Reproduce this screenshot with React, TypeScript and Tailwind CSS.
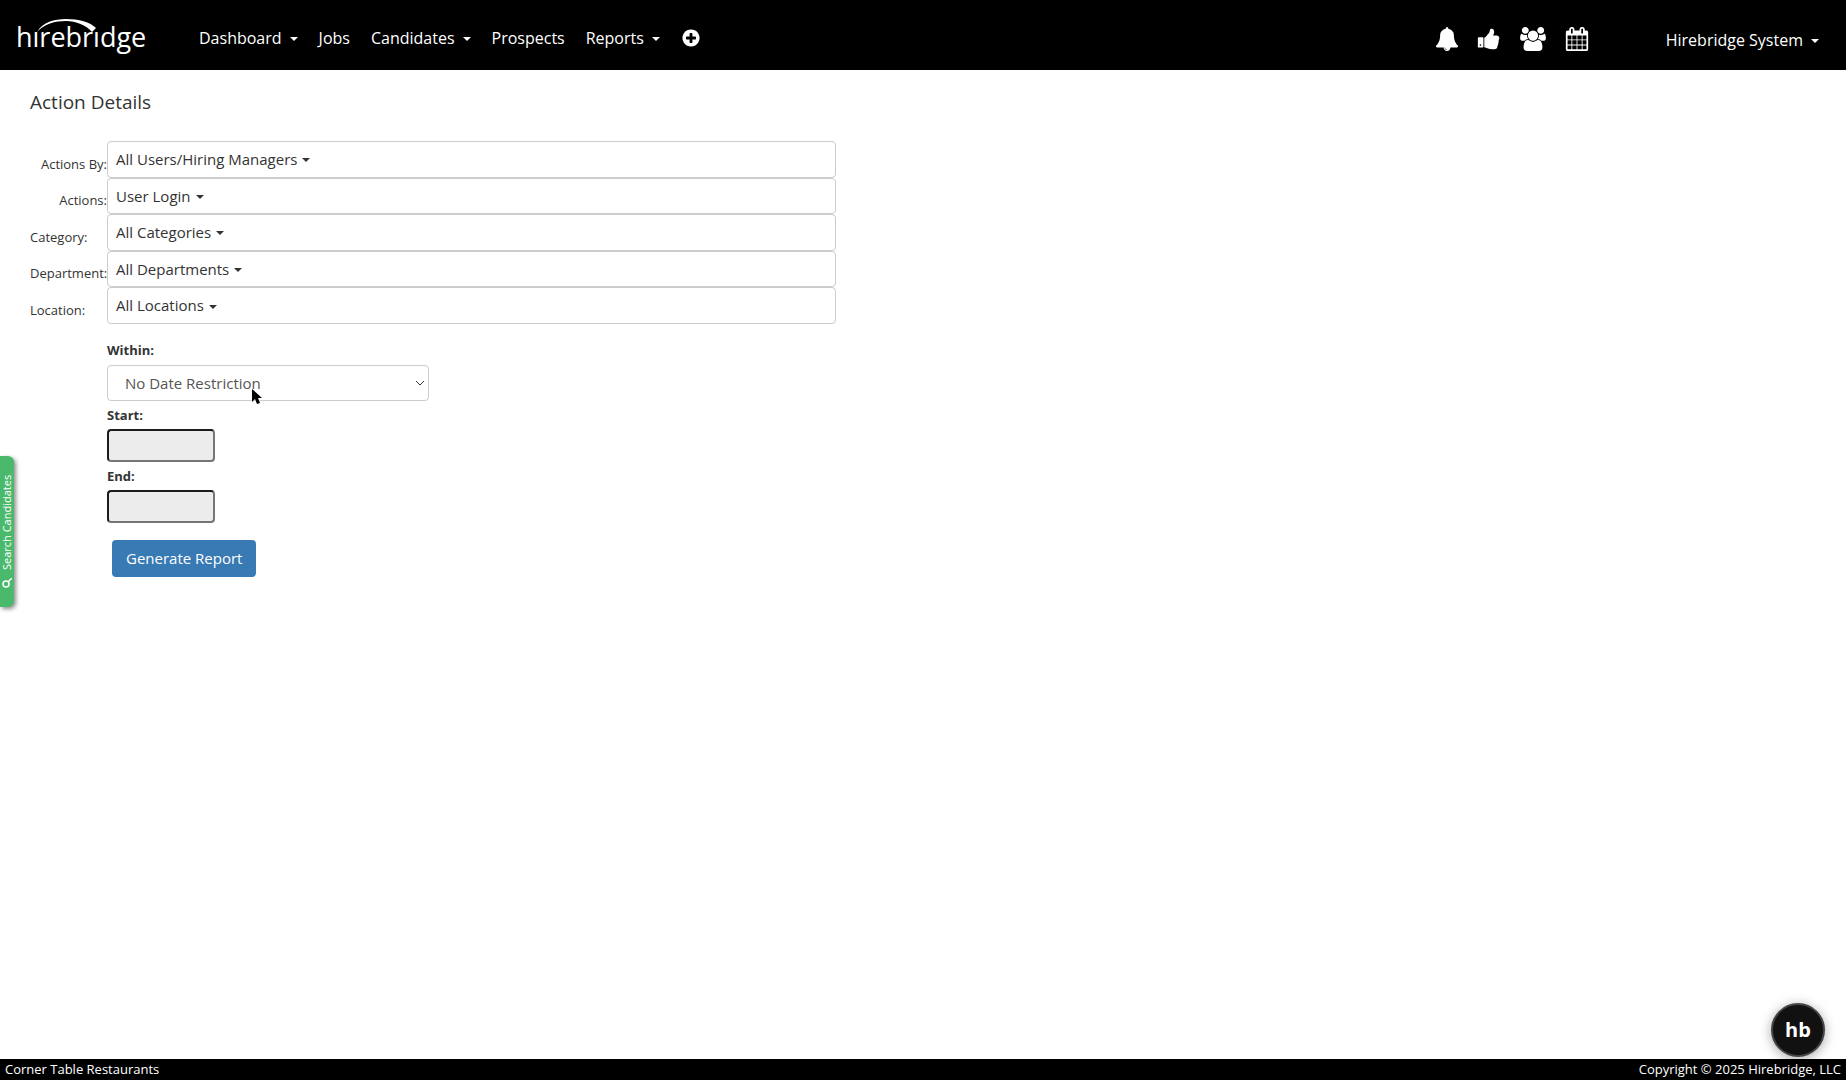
import type { ReactNode } from "react";

interface NavItem {
  label: string;
  hasMenu?: boolean;
}

interface Filter {
  id: string;
  label: string;
  value: string;
  alignRight?: boolean;
}

const NAV_ITEMS: NavItem[] = [
  { label: "Dashboard", hasMenu: true },
  { label: "Jobs" },
  { label: "Candidates", hasMenu: true },
  { label: "Prospects" },
  { label: "Reports", hasMenu: true },
];

const FILTERS: Filter[] = [
  { id: "actions-by", label: "Actions By:", value: "All Users/Hiring Managers", alignRight: true },
  { id: "actions", label: "Actions:", value: "User Login", alignRight: true },
  { id: "category", label: "Category:", value: "All Categories" },
  { id: "department", label: "Department:", value: "All Departments" },
  { id: "location", label: "Location:", value: "All Locations" },
];

const ICONS = {
  plus: "M1344 960v-128q0-26-19-45t-45-19h-256v-256q0-26-19-45t-45-19h-128q-26 0-45 19t-19 45v256h-256q-26 0-45 19t-19 45v128q0 26 19 45t45 19h256v256q0 26 19 45t45 19h128q26 0 45-19t19-45v-256h256q26 0 45-19t19-45zm320-64q0 209-103 385.5t-279.5 279.5-385.5 103-385.5-103-279.5-279.5-103-385.5 103-385.5 279.5-279.5 385.5-103 385.5 103 279.5 279.5 103 385.5z",
  bell: "M912 1696q0-16-16-16-59 0-101.5-42.5t-42.5-101.5q0-16-16-16t-16 16q0 73 51.5 124.5t124.5 51.5q16 0 16-16zm816-288q0 52-38 90t-90 38h-448q0 106-75 181t-181 75-181-75-75-181h-448q-52 0-90-38t-38-90q50-42 91-88t85-119.5 74.5-158.5 50-206 19.5-260q0-152 117-282.5t307-158.5q-8-19-8-39 0-40 28-68t68-28 68 28 28 68q0 20-8 39 190 28 307 158.5t117 282.5q0 139 19.5 260t50 206 74.5 158.5 85 119.5 91 88z",
  thumb: "M320 1344q0-26-19-45t-45-19q-27 0-45.5 19t-18.5 45q0 27 18.5 45.5t45.5 18.5q26 0 45-18.5t19-45.5zm160-512v640q0 26-19 45t-45 19h-288q-26 0-45-19t-19-45v-640q0-26 19-45t45-19h288q26 0 45 19t19 45zm1184 0q0 86-55 149 15 44 15 76 3 76-43 137 17 56 0 117-15 57-54 94 9 112-49 181-64 76-197 78h-129q-66 0-144-15.5t-121.5-29-120.5-39.5q-123-43-158-44-26-1-45-19.5t-19-44.5v-641q0-25 18-43.5t43-20.5q24-2 76-59t101-121q68-87 101-120 18-18 31-48t17.5-48.5 13.5-60.5q7-39 12.5-61t19.5-52 34-50q19-19 45-19 46 0 82.5 10.5t60 26 40 40.5 24 45 12 50 5 45 .5 39q0 38-9.5 76t-19 60-27.5 56q-3 6-10 18t-11 22-8 24h277q78 0 135 57t57 135z",
  users: "M657 896q-162 5-265 128h-134q-82 0-138-40.5t-56-118.5q0-353 124-353 6 0 43.5 21t97.5 42.5 119 21.5q67 0 133-23-5 37-5 66 0 139 81 256zm1071 637q0 120-73 189.5t-194 69.5h-874q-121 0-194-69.5t-73-189.5q0-53 3.5-103.5t14-109 26.5-108.5 43-97.5 62-81 85.5-53.5 111.5-20q10 0 43 21.5t73 48 107 48 135 21.5 135-21.5 107-48 73-48 43-21.5q61 0 111.5 20t85.5 53.5 62 81 43 97.5 26.5 108.5 14 109 3.5 103.5zm-1024-1277q0 106-75 181t-181 75-181-75-75-181 75-181 181-75 181 75 75 181zm704 384q0 159-112.5 271.5t-271.5 112.5-271.5-112.5-112.5-271.5 112.5-271.5 271.5-112.5 271.5 112.5 112.5 271.5zm576 225q0 78-56 118.5t-138 40.5h-134q-103-123-265-128 81-117 81-256 0-29-5-66 66 23 133 23 59 0 119-21.5t97.5-42.5 43.5-21q124 0 124 353zm-128-609q0 106-75 181t-181 75-181-75-75-181 75-181 181-75 181 75 75 181z",
  calendar: "M192 1664h288v-288h-288v288zm352 0h320v-288h-320v288zm-352-352h288v-320h-288v320zm352 0h320v-320h-320v320zm-352-384h288v-288h-288v288zm736 736h320v-288h-320v288zm-384-736h320v-288h-320v288zm768 736h288v-288h-288v288zm-384-352h320v-320h-320v320zm-352-864v-288q0-13-9.5-22.5t-22.5-9.5h-64q-13 0-22.5 9.5t-9.5 22.5v288q0 13 9.5 22.5t22.5 9.5h64q13 0 22.5-9.5t9.5-22.5zm736 864h288v-320h-288v320zm-384-384h320v-288h-320v288zm384 0h288v-288h-288v288zm32-480v-288q0-13-9.5-22.5t-22.5-9.5h-64q-13 0-22.5 9.5t-9.5 22.5v288q0 13 9.5 22.5t22.5 9.5h64q13 0 22.5-9.5t9.5-22.5zm384-64v1280q0 52-38 90t-90 38h-1408q-52 0-90-38t-38-90v-1280q0-52 38-90t90-38h128v-96q0-66 47-113t113-47h64q66 0 113 47t47 113v96h384v-96q0-66 47-113t113-47h64q66 0 113 47t47 113v96h128q52 0 90 38t38 90z",
};

function Icon({ path, className, viewBox = "0 0 1792 1792" }: { path: string; className: string; viewBox?: string }) {
  return (
    <svg viewBox={viewBox} className={className} fill="currentColor" aria-hidden="true">
      <path d={path} />
    </svg>
  );
}

function Caret() {
  return <span className="mt-0.5 inline-block border-x-4 border-t-4 border-x-transparent border-t-current" />;
}

function Logo() {
  return (
    <a href="#" className="relative mt-1 block w-[130px] text-[27px] leading-[40px]">
      h&#305;rebr&#305;dge
      <svg viewBox="0 0 130 40" className="absolute inset-x-0 top-0 h-10 w-full" fill="currentColor" aria-hidden="true">
        <path d="M21 15C27 5 38 2 50 2c13 0 24 3 30 9l-4 4C70 8 60 4 50 4 39 4 28 7 21 15z" />
      </svg>
    </a>
  );
}

function IconButton({ label, children }: { label: string; children: ReactNode }) {
  return (
    <button type="button" aria-label={label}>
      {children}
    </button>
  );
}

function Header() {
  return (
    <header className="flex h-[70px] items-center bg-black pr-[27px] pl-4 text-white">
      <Logo />
      <nav className="ml-[53px] flex items-center gap-[21px] pt-1.5 text-base">
        {NAV_ITEMS.map((item) => (
          <a key={item.label} href="#" className="flex items-center gap-2">
            {item.label}
            {item.hasMenu && <Caret />}
          </a>
        ))}
        <IconButton label="Add">
          <Icon path={ICONS.plus} className="size-5" />
        </IconButton>
      </nav>
      <div className="ml-auto flex items-center gap-[18px] pt-2">
        <IconButton label="Notifications">
          <Icon path={ICONS.bell} className="size-6" />
        </IconButton>
        <IconButton label="Approvals">
          <Icon path={ICONS.thumb} className="size-6" />
        </IconButton>
        <IconButton label="Teams">
          <Icon path={ICONS.users} viewBox="0 0 2048 1792" className="h-6 w-7" />
        </IconButton>
        <IconButton label="Calendar">
          <Icon path={ICONS.calendar} className="size-6" />
        </IconButton>
      </div>
      <button type="button" className="ml-[77px] flex items-center gap-2 pt-2.5 text-base">
        Hirebridge System
        <Caret />
      </button>
    </header>
  );
}

function FilterRow({ filter }: { filter: Filter }) {
  return (
    <div className="flex">
      <label
        htmlFor={filter.id}
        className={`w-[77px] self-center pt-2.5 text-[13px] whitespace-nowrap ${filter.alignRight ? "text-right" : ""}`}
      >
        {filter.label}
      </label>
      <button
        id={filter.id}
        type="button"
        className="flex flex-1 items-center gap-[5px] rounded border border-[#ccc] px-2 text-[15px]"
      >
        {filter.value}
        <Caret />
      </button>
    </div>
  );
}

function DateField({ id, label }: { id: string; label: string }) {
  return (
    <div className="flex flex-col items-start">
      <label htmlFor={id} className="text-[13px] leading-5 font-bold">
        {label}
      </label>
      <input
        id={id}
        type="text"
        disabled
        className="mt-1 h-[33px] w-[108px] rounded border-2 border-t-[#1c1c1c] border-r-[#767676] border-b-[#767676] border-l-[#1c1c1c] bg-[#ececec] px-2"
      />
    </div>
  );
}

// Mouse pointer resting over the date select
function Pointer() {
  return (
    <svg viewBox="0 0 12 18" className="absolute top-[23px] left-36 h-[18px] w-3" aria-hidden="true">
      <path d="M1 1v13l3-3 2 5 3-1-2-5h4z" fill="#000" stroke="#fff" strokeWidth="1" paintOrder="stroke" />
    </svg>
  );
}

export default function App() {
  return (
    <div className="relative flex min-h-screen flex-col bg-white font-['Open_Sans',sans-serif] text-[#333]">
      <Header />

      <main className="flex-1 px-[30px] pt-4">
        <h1 className="text-[19px] leading-8">Action Details</h1>

        <form className="mt-[23px]">
          <div className="grid h-[183px] w-1/2 max-w-[806px] grid-rows-5">
            {FILTERS.map((filter) => (
              <FilterRow key={filter.id} filter={filter} />
            ))}
          </div>

          <div className="mt-4 ml-[77px]">
            <label htmlFor="within" className="block text-[13px] leading-5 font-bold">
              Within:
            </label>
            <div className="relative mt-[5px] w-[322px]">
              <select
                id="within"
                className="h-9 w-full appearance-none rounded border border-[#ccc] bg-white px-[17px] text-[15px] text-[#555]"
              >
                <option>No Date Restriction</option>
              </select>
              <svg viewBox="0 0 10 6" className="pointer-events-none absolute top-[15px] right-1 h-1.5 w-2.5" fill="none" stroke="#333" aria-hidden="true">
                <path d="M1 1l4 4 4-4" />
              </svg>
              <Pointer />
            </div>
            <div className="mt-1 flex flex-col gap-1">
              <DateField id="start" label="Start:" />
              <DateField id="end" label="End:" />
            </div>
            <button type="button" className="mt-[17px] ml-[5px] h-[37px] rounded bg-[#387ab3] px-3.5 text-[15px] text-white">
              Generate Report
            </button>
          </div>
        </form>
      </main>

      <button
        type="button"
        className="absolute top-[456px] left-0 flex h-[151px] w-3.5 rotate-180 items-center justify-center gap-2 rounded-l-md bg-[#4bb96c] text-[11px] text-white shadow-[-2px_-2px_4px_rgba(0,0,0,0.45)] [writing-mode:vertical-rl]"
      >
        <svg viewBox="0 0 10 10" className="size-2.5" fill="none" stroke="currentColor" strokeWidth="1.5" aria-hidden="true">
          <circle cx="6" cy="4" r="3" />
          <path d="M4 6l-4 4" />
        </svg>
        Search Candidates
      </button>

      <button
        type="button"
        className="absolute right-[21px] bottom-[23px] size-[54px] rounded-full border-2 border-[#444] bg-[#111] text-xl font-bold text-white shadow-[0_2px_12px_rgba(0,0,0,0.35)]"
      >
        hb
      </button>

      <footer className="flex items-center justify-between bg-black px-[5px] pb-px text-[13px] leading-5 text-white">
        <span>Corner Table Restaurants</span>
        <span>Copyright © 2025 Hirebridge, LLC</span>
      </footer>
    </div>
  );
}
